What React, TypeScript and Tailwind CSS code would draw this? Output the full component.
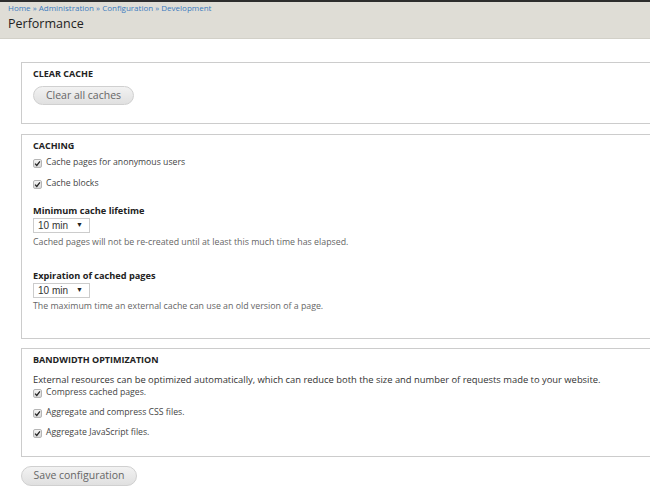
import React from 'react';

const font = { fontFamily: '"Open Sans", "DejaVu Sans", sans-serif' };

function Check({ label }: { label: string }) {
  return (
    <div className="flex items-center gap-[4px] h-[12px]">
      <span className="flex items-center justify-center w-[9px] h-[9px] border border-[#b5b5b5] rounded-[2px] bg-gradient-to-b from-[#f4f4f4] to-[#d8d8d8]">
        <svg viewBox="0 0 10 10" className="w-[7px] h-[7px]">
          <path d="M1.5 5.2 L4 7.8 L8.5 2" fill="none" stroke="#222" strokeWidth="1.8" />
        </svg>
      </span>
      <span className="text-[8.7px] text-[#444]">{label}</span>
    </div>
  );
}

function Select() {
  return (
    <div className="flex items-center justify-between w-[57px] h-[15px] border border-[#ccc] bg-white pl-[4px] pr-[6px] font-['Liberation_Sans',sans-serif] text-[10px] text-[#333]">
      <span>10 min</span>
      <span className="text-[7px] text-[#222]">▼</span>
    </div>
  );
}

function Fieldset({ legend, children, className }: { legend: string; children?: React.ReactNode; className?: string }) {
  return (
    <div className={`w-[640px] border border-[#ccc] border-r-0 bg-white pl-[11px] ${className ?? ''}`}>
      <div className="text-[9px] font-bold text-[#222] uppercase pt-[5px] leading-[12px]">{legend}</div>
      {children}
    </div>
  );
}

export default function App() {
  return (
    <div className="w-[650px] h-[502px] overflow-hidden bg-white" style={font}>
      <div className="h-[2px] bg-[#2d2d2d]" />
      <div className="h-[37px] bg-[#dfddd6] border-b border-[#d2d0c8] px-[8px]">
        <div className="text-[8px] text-[#3a7bbf] leading-[11px]">
          Home » Administration » Configuration » Development
        </div>
        <h1 className="text-[12.5px] text-[#222] leading-[18px] mt-[2px]">Performance</h1>
      </div>

      <div className="pl-[21px] pt-[23px]">
        <Fieldset legend="Clear cache" className="h-[62px]">
          <button className="mt-[6px] w-[101px] h-[19px] rounded-full border border-[#d0d0d0] bg-gradient-to-b from-[#f2f2f2] to-[#e0e0e0] text-[10.5px] text-[#666]">
            Clear all caches
          </button>
        </Fieldset>

        <Fieldset legend="Caching" className="h-[205px] mt-[10px]">
          <div className="mt-[5px] flex flex-col gap-[9px]">
            <Check label="Cache pages for anonymous users" />
            <Check label="Cache blocks" />
          </div>
          <div className="mt-[15px] text-[9.2px] font-bold text-[#222] leading-[12px]">Minimum cache lifetime</div>
          <div className="mt-[1px]"><Select /></div>
          <div className="mt-[3px] text-[8.8px] text-[#666] leading-[12px]">
            Cached pages will not be re-created until at least this much time has elapsed.
          </div>
          <div className="mt-[22px] text-[9.2px] font-bold text-[#222] leading-[12px]">Expiration of cached pages</div>
          <div className="mt-[1px]"><Select /></div>
          <div className="mt-[2px] text-[8.8px] text-[#666] leading-[12px]">
            The maximum time an external cache can use an old version of a page.
          </div>
        </Fieldset>

        <Fieldset legend="Bandwidth optimization" className="h-[109px] mt-[9px]">
          <div className="mt-[7px] text-[9.4px] text-[#333] leading-[13px] whitespace-nowrap">
            External resources can be optimized automatically, which can reduce both the size and number of requests made to your website.
          </div>
          <div className="mt-[1px] flex flex-col gap-[8px]">
            <Check label="Compress cached pages." />
            <Check label="Aggregate and compress CSS files." />
            <Check label="Aggregate JavaScript files." />
          </div>
        </Fieldset>

        <button className="mt-[9px] w-[116px] h-[20px] rounded-full border border-[#d0d0d0] bg-gradient-to-b from-[#f2f2f2] to-[#e0e0e0] text-[10.5px] text-[#666]">
          Save configuration
        </button>
      </div>
    </div>
  );
}
